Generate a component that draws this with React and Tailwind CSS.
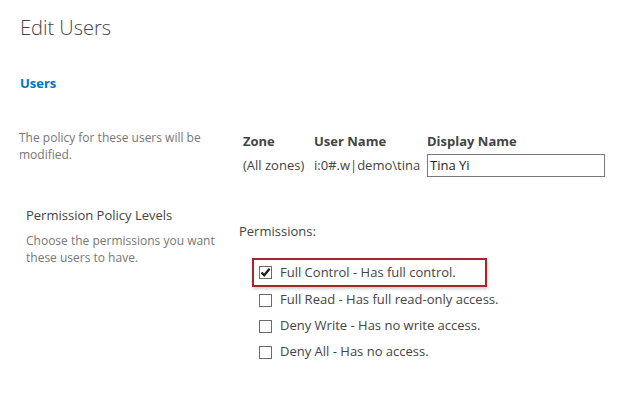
import React from "react";

const perms = [
  { label: "Full Control - Has full control.", checked: true },
  { label: "Full Read - Has full read-only access.", checked: false },
  { label: "Deny Write - Has no write access.", checked: false },
  { label: "Deny All - Has no access.", checked: false },
];

function Box({ checked }) {
  return (
    <span className="flex h-[13px] w-[13px] shrink-0 items-center justify-center border border-[#6b6b6b] bg-white">
      {checked && (
        <svg width="11" height="11" viewBox="0 0 11 11">
          <path d="M1.5 5.5 L4.2 8.3 L9.6 1.8" fill="none" stroke="#1a1a1a" strokeWidth="2.2" />
        </svg>
      )}
    </span>
  );
}

export default function App() {
  return (
    <div
      className="h-[402px] w-[622px] overflow-hidden bg-white text-[13px] text-[#444]"
      style={{ fontFamily: '"Open Sans", "Noto Sans", sans-serif' }}
    >
      {/* title */}
      <div className="pl-[20px] pt-[14px] text-[20px] font-light leading-[28px] text-[#444]">
        Edit Users
      </div>

      <div className="pl-[20px] pt-[32px] text-[13px] font-bold leading-[18px] text-[#0072c6]">
        Users
      </div>

      {/* users row */}
      <div className="mt-[37px] flex">
        <div className="w-[223px] pl-[19px] text-[12px] leading-[17px] text-[#777]">
          The policy for these users will be modified.
        </div>
        <div className="pl-[20px] pt-[2px]">
          <div className="flex font-bold leading-[20px] text-[#444]">
            <div className="w-[71px]">Zone</div>
            <div className="w-[113px]">User Name</div>
            <div>Display Name</div>
          </div>
          <div className="mt-[3px] flex items-center">
            <div className="w-[71px]">(All zones)</div>
            <div className="w-[113px]">i:0#.w|demo\tina</div>
            <div className="flex h-[23px] w-[178px] items-center border border-[#777] pl-[2px] text-[#222]">
              Tina Yi
            </div>
          </div>
        </div>
      </div>

      {/* permission row */}
      <div className="mt-[28px] flex">
        <div className="w-[229px] pl-[26px]">
          <div className="leading-[20px] text-[#444]">Permission Policy Levels</div>
          <div className="mt-[7px] text-[12px] leading-[17px] text-[#777]">
            Choose the permissions you want these users to have.
          </div>
        </div>
        <div className="pl-[10px] pt-[16px]">
          <div className="leading-[20px]">Permissions:</div>
          <div className="mt-[17px] flex flex-col">
            {perms.map((p) => (
              <div
                key={p.label}
                className={
                  p.checked
                    ? "ml-[13px] flex h-[29px] w-[235px] items-center gap-[8px] border-2 border-[#a4262c] pl-[5px] shadow-[1px_2px_3px_rgba(0,0,0,0.2)]"
                    : "flex h-[26px] items-center gap-[8px] pl-[20px]"
                }
              >
                <Box checked={p.checked} />
                <span className="whitespace-nowrap text-[#444]">{p.label}</span>
              </div>
            ))}
          </div>
        </div>
      </div>
    </div>
  );
}
